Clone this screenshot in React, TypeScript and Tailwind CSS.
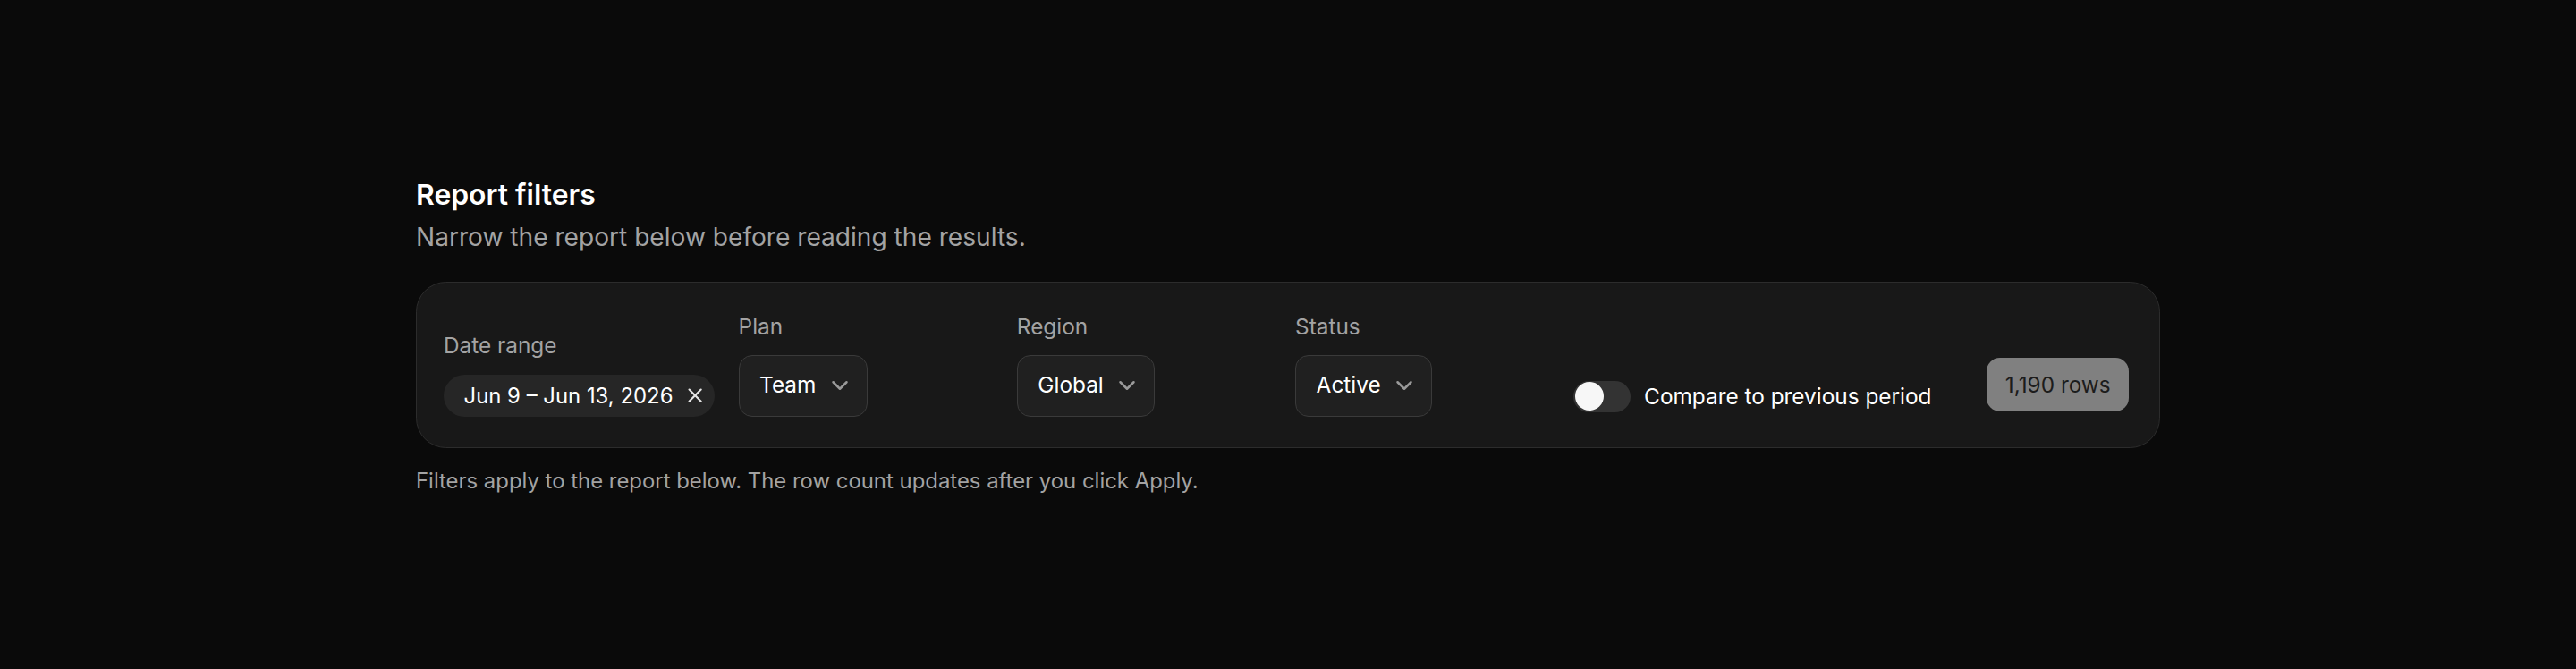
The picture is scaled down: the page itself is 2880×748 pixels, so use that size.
import React, { useState } from "react";
import { ChevronDown, X } from "lucide-react";

function SelectField({ label, value }: { label: string; value: string }) {
  return (
    <div className="flex w-[152px] shrink-0 flex-col items-start">
      <span className="text-[13px] leading-4 text-[#a3a3a3]">{label}</span>
      <button
        type="button"
        className="mt-[9px] flex h-[37px] items-center gap-1.5 rounded-lg border border-[#3a3a3a] bg-[#202020] pl-3 pr-2 text-[13px] leading-5 text-white"
      >
        <span>{value}</span>
        <ChevronDown size={16} strokeWidth={2} className="text-[#9a9a9a]" />
      </button>
    </div>
  );
}

export default function App() {
  const [compare, setCompare] = useState(false);
  return (
    <div className="flex min-h-screen w-full items-center justify-center bg-[#0a0a0a] font-['Inter',sans-serif]">
      <section className="w-[1040px] [zoom:1.875]">
        <h2 className="text-[17px] leading-6 font-semibold text-white">Report filters</h2>
        <p className="mt-1 text-[15px] leading-5 text-[#a3a3a3]">
          Narrow the report below before reading the results.
        </p>

        <div className="mt-4 flex items-end gap-[14px] rounded-[18px] border border-[#2c2c2c] bg-[#181818] px-4 py-[18px]">
          <div className="flex shrink-0 flex-col items-start">
            <span className="text-[13px] leading-4 text-[#a3a3a3]">Date range</span>
            <div className="mt-[9.5px] flex h-[25px] items-center gap-1.5 rounded-full bg-[#262626] pl-3 pr-[5px] text-[12.75px] leading-5 text-white">
              <span>Jun 9 – Jun 13, 2026</span>
              <button type="button" aria-label="Clear date range" className="flex items-center text-[#e5e5e5]">
                <X size={14} strokeWidth={2} />
              </button>
            </div>
          </div>

          <SelectField label="Plan" value="Team" />
          <SelectField label="Region" value="Global" />
          <SelectField label="Status" value="Active" />

          <label className="mb-[2px] flex cursor-pointer items-center gap-2">
            <button
              type="button"
              role="switch"
              aria-checked={compare}
              onClick={() => setCompare(!compare)}
              className="relative h-[19px] w-[34px] shrink-0 rounded-full bg-[#333333]"
            >
              <span className="absolute left-px top-px h-[17px] w-[17px] rounded-full bg-[#f7f7f7]" />
            </button>
            <span className="text-[13px] leading-5 text-white">Compare to previous period</span>
          </label>

          <div className="mb-[3px] ml-auto mr-0.5 rounded-lg bg-[#808080] px-[11px] py-1.5 text-[13px] leading-5 text-[#1c1c1c]">
            1,190 rows
          </div>
        </div>

        <p className="mt-3 text-[12.75px] leading-4 text-[#a3a3a3]">
          Filters apply to the report below. The row count updates after you click Apply.
        </p>
      </section>
    </div>
  );
}
